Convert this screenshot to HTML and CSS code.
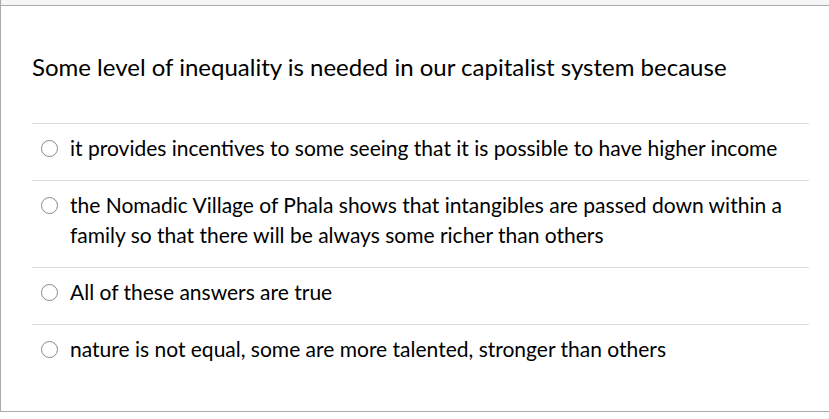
FILE: index.html
```html
<!DOCTYPE html>
<html>
<head>
<meta charset="utf-8">
<link rel="stylesheet" href="styles.css">
</head>
<body>
<div class="quiz">
  <div class="q-header"></div>
  <div class="q-body">
    <div class="q-text">Some level of inequality is needed in our capitalist system because</div>
    <div class="answers">
      <div class="answer"><span class="radio"></span><span class="label">it provides incentives to some seeing that it is possible to have higher income</span></div>
      <div class="answer"><span class="radio"></span><span class="label">the Nomadic Village of Phala shows that intangibles are passed down within a family so that there will be always some richer than others</span></div>
      <div class="answer"><span class="radio"></span><span class="label">All of these answers are true</span></div>
      <div class="answer"><span class="radio"></span><span class="label">nature is not equal, some are more talented, stronger than others</span></div>
    </div>
  </div>
</div>
</body>
</html>
```
FILE: styles.css
```css
html, body {
  margin: 0;
  padding: 0;
  background: #fff;
}
body {
  font-family: Lato, "Liberation Sans", sans-serif;
  color: #000;
}
.quiz {
  width: 850px;
  border-left: 1px solid #aaa;
  border-bottom: 1px solid #aaa;
}
.q-header {
  height: 5px;
  background: #f5f5f5;
  border-bottom: 1px solid #aaa;
}
.q-body {
  padding: 45px 42px 30px 31px;
}
.q-text {
  font-size: 24px;
  line-height: 32px;
  margin-bottom: 40px;
}
.answers {
  display: flex;
  flex-direction: column;
}
.answer {
  display: flex;
  align-items: flex-start;
  border-top: 1px solid #ddd;
  padding: 9px 0 17px;
  font-size: 21px;
  line-height: 30px;
}
.radio {
  flex: none;
  box-sizing: border-box;
  width: 17px;
  height: 17px;
  border: 1px solid #888;
  border-radius: 50%;
  margin: 7px 12px 0 9px;
}
.label {
  flex: 1;
  padding-right: 20px;
}
```
